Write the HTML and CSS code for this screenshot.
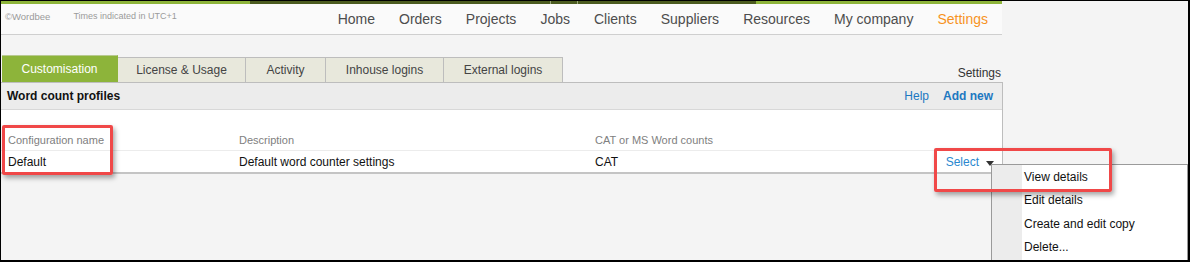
FILE: index.html
```html
<!DOCTYPE html>
<html>
<head>
<meta charset="utf-8">
<link rel="stylesheet" href="styles.css">
</head>
<body>
<div class="frame">
  <div class="page">
    <header class="topbar">
      <div class="meta">
        <span class="brand">©Wordbee</span>
        <span class="tz">Times indicated in UTC+1</span>
      </div>
      <nav class="nav">
        <a class="nav-item">Home</a>
        <a class="nav-item">Orders</a>
        <a class="nav-item">Projects</a>
        <a class="nav-item">Jobs</a>
        <a class="nav-item">Clients</a>
        <a class="nav-item">Suppliers</a>
        <a class="nav-item">Resources</a>
        <a class="nav-item">My company</a>
        <a class="nav-item nav-active">Settings</a>
      </nav>
    </header>

    <div class="tabbar">
      <div class="tab tab-active tab-w1">Customisation</div>
      <div class="tab tab-w2">License &amp; Usage</div>
      <div class="tab tab-w3">Activity</div>
      <div class="tab tab-w4">Inhouse logins</div>
      <div class="tab tab-w5">External logins</div>
      <div class="crumb">Settings</div>
    </div>

    <section class="panel">
      <div class="panel-head">
        <h2 class="panel-title">Word count profiles</h2>
        <div class="panel-actions">
          <a class="link">Help</a>
          <a class="link link-bold">Add new</a>
        </div>
      </div>
      <div class="table">
        <div class="row row-head">
          <div class="cell">Configuration name</div>
          <div class="cell">Description</div>
          <div class="cell">CAT or MS Word counts</div>
          <div class="cell"></div>
        </div>
        <div class="row row-data">
          <div class="cell">Default</div>
          <div class="cell">Default word counter settings</div>
          <div class="cell">CAT</div>
          <div class="cell cell-action"><a class="select">Select</a><span class="caret"></span></div>
        </div>
      </div>
    </section>
  </div>

  <ul class="menu">
    <li class="menu-item">View details</li>
    <li class="menu-item">Edit details</li>
    <li class="menu-item">Create and edit copy</li>
    <li class="menu-item">Delete...</li>
  </ul>

  <div class="mark mark-name"></div>
  <div class="mark mark-select"></div>
</div>
</body>
</html>
```

FILE: styles.css
```css
* { box-sizing: border-box; }
html, body { margin: 0; padding: 0; }
body {
  font-family: "Liberation Sans", Arial, sans-serif;
  background: #fff;
}
.frame {
  position: relative;
  width: 1190px;
  height: 262px;
  border-top: 1px solid #000;
  border-left: 1px solid #000;
  border-right: 2px solid #000;
  border-bottom: 2px solid #000;
  background: #f4f4f4;
  overflow: hidden;
}
.page {
  width: 1002px;
}

/* top bar */
.topbar {
  display: flex;
  justify-content: space-between;
  height: 34px;
  padding-top: 3px;
  background:
    linear-gradient(to right, #8db43a 0, #8db43a 249px, #4b5b1f 249px, #4b5b1f 549px, #9aa77a 549px, #9aa77a 550px, #4b5b1f 550px, #4b5b1f 576px, #9aa77a 576px, #9aa77a 577px, #4b5b1f 577px, #4b5b1f 755px, #8db43a 755px) top left / 1001px 3px no-repeat,
    #fafafa;
  border-bottom: 1px solid #cfcfcf;
  width: 1001px;
}
.meta {
  display: flex;
  gap: 23px;
  padding-left: 4px;
  padding-top: 7px;
  font-size: 9px;
  color: #9a9a9a;
}
.brand { font-size: 9.5px; }
.nav {
  display: flex;
  align-items: center;
  padding-right: 2px;
}
.nav-item {
  font-size: 14px;
  color: #4d4d4d;
  padding: 0 12px;
  line-height: 30px;
}
.nav-active { color: #f7931e; }

/* tabs */
.tabbar {
  display: flex;
  align-items: flex-end;
  margin-top: 20px;
  padding-left: 1px;
  height: 27px;
}
.tab {
  height: 25px;
  background: #e8e8dc;
  border: 1px solid #bdbdbd;
  border-bottom: none;
  border-left: none;
  font-size: 12px;
  color: #444;
  text-align: center;
  line-height: 24px;
}
.tab-active {
  height: 27px;
  background: #8db43a;
  border-color: #8db43a;
  color: #fff;
  line-height: 27px;
  border-top: 1px solid #b8c98f;
}
.tab-w1 { width: 116px; }
.tab-w2 { width: 128px; }
.tab-w3 { width: 80px; }
.tab-w4 { width: 118px; }
.tab-w5 { width: 119px; }
.crumb {
  margin-left: auto;
  font-size: 12px;
  color: #333;
  padding-right: 2px;
  padding-bottom: 2px;
}

/* panel */
.panel {
  border-top: 1px solid #bdbdbd;
  border-right: 1px solid #bdbdbd;
  background: #fff;
}
.panel-head {
  display: flex;
  justify-content: space-between;
  align-items: center;
  height: 27px;
  background: #ececec;
  border-bottom: 1px solid #d8d8d8;
  padding: 0 9px 0 6px;
}
.panel-title {
  margin: 0;
  font-size: 12px;
  font-weight: bold;
  color: #111;
}
.panel-actions {
  display: flex;
  gap: 14px;
  font-size: 12px;
}
.link { color: #1d78c1; }
.link-bold { font-weight: bold; }

.table {
  padding-top: 19px;
  border-bottom: 2px solid #c4c4c4;
}
.row {
  display: grid;
  grid-template-columns: 231px 356px 1fr 100px;
  padding: 0 8px 0 7px;
  height: 21px;
  align-items: center;
}
.row-head {
  font-size: 11px;
  color: #808080;
  border-bottom: 1px solid #ececec;
  height: 22px;
}
.row-data {
  font-size: 12px;
  color: #111;
}
.cell-action {
  display: flex;
  justify-content: flex-end;
  align-items: center;
  gap: 7px;
}
.select { color: #2a88cf; }
.caret {
  width: 0;
  height: 0;
  border-left: 4px solid transparent;
  border-right: 4px solid transparent;
  border-top: 5px solid #333;
  margin-top: 3px;
}

/* dropdown menu */
.menu {
  position: absolute;
  left: 990px;
  top: 163px;
  width: 197px;
  height: 110px;
  margin: 0;
  padding: 1px 0 0 0;
  list-style: none;
  border: 1px solid #9a9a9a;
  background: linear-gradient(to right, #ececec 0, #ececec 30px, #fff 30px);
  z-index: 2;
}
.menu-item {
  font-size: 12px;
  color: #111;
  padding-left: 32px;
  height: 23.3px;
  line-height: 23px;
}

/* annotation marks */
.mark {
  position: absolute;
  border: 3px solid #f04848;
  border-radius: 2px;
  box-shadow: 2px 3px 5px rgba(0, 0, 0, 0.35);
  z-index: 3;
}
.mark-name {
  left: 1px;
  top: 124px;
  width: 111px;
  height: 50px;
}
.mark-select {
  left: 933px;
  top: 147px;
  width: 178px;
  height: 44px;
}
```
